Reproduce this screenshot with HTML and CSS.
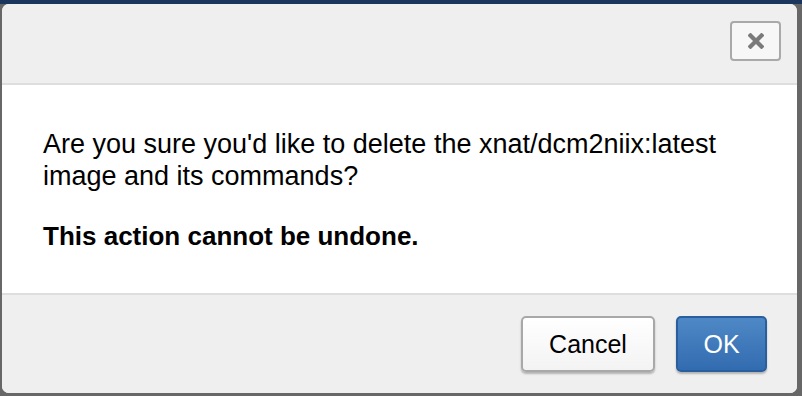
FILE: index.html
```html
<!DOCTYPE html>
<html>
<head>
<meta charset="utf-8">
<link rel="stylesheet" href="styles.css">
</head>
<body>
<div class="dialog">
  <div class="dialog-header">
    <button class="close-btn" aria-label="Close">
      <svg width="16" height="16" viewBox="0 0 16 16"><path d="M2.5 2.5 L13.5 13.5 M13.5 2.5 L2.5 13.5" stroke="#7a7a7a" stroke-width="4.2" stroke-linecap="square" fill="none"/></svg>
    </button>
  </div>
  <div class="dialog-body">
    <p>Are you sure you'd like to delete the xnat/dcm2niix:latest image and its commands?</p>
    <p class="strong">This action cannot be undone.</p>
  </div>
  <div class="dialog-footer">
    <button class="btn btn-default">Cancel</button>
    <button class="btn btn-primary">OK</button>
  </div>
</div>
</body>
</html>
```

FILE: styles.css
```css
html, body {
  margin: 0;
  height: 100%;
}
body {
  background: linear-gradient(to bottom, #1c355f 0, #1c355f 4px, #676767 4px);
  padding: 4px 5px 3px 2px;
  box-sizing: border-box;
  font-family: "Liberation Sans", Arial, Helvetica, sans-serif;
  overflow: hidden;
}
.dialog {
  width: 795px;
  height: 389px;
  background: #fff;
  border-radius: 7px;
  overflow: hidden;
  display: flex;
  flex-direction: column;
}
.dialog-header {
  height: 79px;
  background: #efefef;
  border-bottom: 2px solid #dedede;
  box-sizing: content-box;
  display: flex;
  justify-content: flex-end;
  align-items: flex-start;
  padding-right: 16px;
}
.close-btn {
  margin-top: 17px;
  width: 51px;
  height: 40px;
  background: #f7f7f7;
  border: 2px solid #a9a9a9;
  border-radius: 4px;
  padding: 0;
  display: flex;
  align-items: center;
  justify-content: center;
}
.dialog-body {
  height: 208px;
  box-sizing: border-box;
  padding: 43px 40px 0 41px;
  color: #000;
  font-size: 27px;
  line-height: 32px;
}
.dialog-body p {
  margin: 0 0 28px 0;
}
.dialog-body .strong {
  font-weight: bold;
  font-size: 26px;
}
.dialog-footer {
  flex: 1;
  background: #efefef;
  border-top: 2px solid #dedede;
  display: flex;
  justify-content: flex-end;
  align-items: flex-start;
  gap: 21px;
  padding: 21px 30px 0 0;
}
.btn {
  height: 56px;
  border-radius: 5px;
  font-family: "Liberation Sans", Arial, Helvetica, sans-serif;
  font-size: 25px;
  padding: 0;
  box-shadow: 0 2px 2px rgba(0,0,0,0.25);
}
.btn-default {
  width: 134px;
  background: linear-gradient(to bottom, #ffffff, #f3f3f3);
  border: 2px solid #a8a8a8;
  color: #000;
}
.btn-primary {
  width: 91px;
  background: linear-gradient(to bottom, #4f88c6, #326cb0);
  border: 2px solid #2a5e9c;
  color: #fff;
}
```
